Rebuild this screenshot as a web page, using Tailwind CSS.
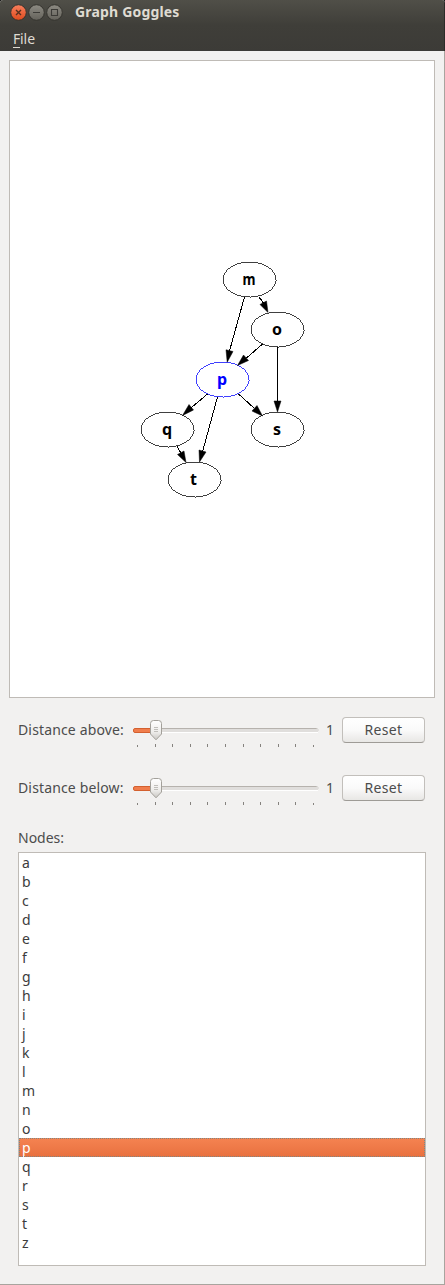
<!DOCTYPE html>
<html lang="en">
<head>
<meta charset="utf-8">
<title>Graph Goggles</title>
<script src="https://cdn.jsdelivr.net/npm/@tailwindcss/browser@4"></script>
</head>
<body class="bg-black">
<div class="flex h-[1285px] w-[445px] flex-col overflow-hidden rounded-t-[3px] border-b border-[#a8a49e] bg-[#f2f1f0] font-['Noto_Sans',sans-serif] text-[14px] text-[#4c4c4c]">
  <header class="h-[51px] shrink-0 border-r border-[#2c2b28] bg-linear-to-b from-[#504f48] via-[#3f3e39] via-50% to-[#3c3b37] text-[#dfdbd2]">
    <div class="flex h-[25px] items-center pl-[10px]">
      <svg class="h-[18px] w-[54px]" viewBox="10 4 54 18" fill="none">
        <defs>
          <linearGradient id="red" x2="0" y2="1"><stop stop-color="#f8805e"/><stop offset="1" stop-color="#dd4a1d"/></linearGradient>
          <linearGradient id="gray" x2="0" y2="1"><stop stop-color="#8d8b83"/><stop offset="1" stop-color="#64625b"/></linearGradient>
        </defs>
        <g stroke="#35342f" stroke-width="1">
          <circle cx="18.5" cy="12.5" r="7.8" fill="url(#red)"/>
          <circle cx="36.5" cy="12.5" r="7.8" fill="url(#gray)"/>
          <circle cx="54.5" cy="12.5" r="7.8" fill="url(#gray)"/>
        </g>
        <path d="M16 10l5 5M21 10l-5 5" stroke="#55301f" stroke-width="1.4"/>
        <path d="M33 12.5h7M51.500 9.500h6v6h-6z" stroke="#3c3b37" stroke-width="1.1"/>
      </svg>
      <h1 class="-mt-[2px] ml-[11px] text-[14px] leading-[24px] font-bold tracking-[0.18px]">Graph Goggles</h1>
    </div>
    <nav class="pl-[13px] text-[14px] leading-[28px]"><span class="inline-block h-[23px] w-[7px] border-b border-[#dfdbd2]">F</span><span>ile</span></nav>
  </header>
  <main class="flex grow flex-col border-r border-[#a8a49e] pt-[9px] pr-[9px] pl-[9px]">
    <div class="h-[638px] w-[426px] shrink-0 border border-[#bfbbb6] bg-white">
      <svg class="block h-[636px] w-[424px]" viewBox="10 61 424 636">
        <g fill="none" stroke="#000" stroke-width="1">
          <g stroke-width=".75" shape-rendering="crispEdges">
            <ellipse cx="249.5" cy="279.5" rx="26.5" ry="17.5"/>
            <ellipse cx="277.5" cy="329.5" rx="26.5" ry="17.5"/>
            <ellipse cx="222.5" cy="379.5" rx="26.5" ry="17.5" stroke="#00f"/>
            <ellipse cx="167.5" cy="429.5" rx="26.5" ry="17.5"/>
            <ellipse cx="277.5" cy="429.5" rx="26.5" ry="17.5"/>
            <ellipse cx="194.500" cy="479.5" rx="26.5" ry="17.5"/>
          </g>
          <path shape-rendering="crispEdges" d="M244.500 297L229.500 351M259 297L263.500 303M262.500 344L246.500 358M277.500 347V402M207.500 394L191.500 407.500M217.500 397L202.500 452M238.500 394L254.500 408.500M177 446.500L181 453"/>
        </g>
        <g fill="#000" stroke="#000" stroke-width=".5">
          <path d="M226 349.800L233 351.500L227.200 362.200ZM260 304.500L266.500 301L268 312.500ZM243.500 355L248.500 360.500L237.500 365.500ZM274 401h7L277.500 412ZM189 404.500L193.500 410L182.500 415.500ZM199 450L206 452L199.500 462ZM257 405.500L252 411L262.500 416ZM177.500 454.500L184 451L186 462.500Z"/>
        </g>
        <g class="text-[16px] font-bold" text-anchor="middle">
          <text x="249" y="285" textLength="13" lengthAdjust="spacingAndGlyphs">m</text><text x="277" y="335">o</text><text x="222" y="385" fill="#00f">p</text><text x="167" y="435">q</text><text x="277" y="435">s</text><text x="193.500" y="485">t</text>
        </g>
      </svg>
    </div>
    <svg class="h-0 w-0 shrink-0">
      <defs>
        <linearGradient id="thumb" x2="0" y2="1"><stop stop-color="#fff"/><stop offset=".6" stop-color="#eeedeb"/><stop offset="1" stop-color="#c9c7c3"/></linearGradient>
        <g id="slider" fill="none">
          <path d="M151 728.500h165.500q1.500 0 1.500 2" stroke="#b6b2ad"/>
          <path d="M151 730.500h167" stroke="#e0dedc" stroke-width="3"/>
          <path d="M151 732.500h167" stroke="#fff"/>
          <rect x="133.500" y="728.500" width="20" height="4" rx="1.500" fill="#f07d4c" stroke="#d3602f"/>
          <path d="M150.500 723.500q0-3 3-3h5q3 0 3 3v10.500l-5.500 5.800l-5.500-5.800z" fill="url(#thumb)" stroke="#a3a09a"/>
          <path d="M154 727.500h4M154 729.500h4M154 731.500h4" stroke="#c0beba"/>
          <path d="M137.500 745v2M155.500 744v3M172.500 744v3M190.500 744v3M207.500 744v3M225.500 744v3M243.500 744v3M260.500 744v3M278.500 744v3M295.500 744v3M313.500 745v2" stroke="#85827e"/>
        </g>
      </defs>
    </svg>
    <div class="mt-[14px] flex h-[58px] shrink-0 items-start pl-[9px]">
      <label class="mt-[5px] w-[114px] text-[14px] leading-[26px] tracking-[0.15px] whitespace-nowrap">Distance above:</label>
      <svg class="mt-[5px] h-[32px] w-[188px]" viewBox="132 717 188 32"><use href="#slider"/></svg>
      <span class="ml-[6px] mt-[5px] w-[16px] leading-[26px]">1</span>
      <button class="mt-[5px] h-[26px] w-[83px] rounded-[4px] border border-[#c2bfbb] border-b-[#9e9b96] bg-linear-to-b from-white via-[#fafafa] to-[#e8e7e5] text-[14px] leading-[24px] tracking-[0.3px]">Reset</button>
    </div>
    <div class="flex h-[58px] shrink-0 items-start pl-[9px]">
      <label class="mt-[5px] w-[114px] text-[14px] leading-[26px] tracking-[0.15px] whitespace-nowrap">Distance below:</label>
      <svg class="mt-[5px] h-[32px] w-[188px]" viewBox="132 717 188 32"><use href="#slider"/></svg>
      <span class="ml-[6px] mt-[5px] w-[16px] leading-[26px]">1</span>
      <button class="mt-[5px] h-[26px] w-[83px] rounded-[4px] border border-[#c2bfbb] border-b-[#9e9b96] bg-linear-to-b from-white via-[#fafafa] to-[#e8e7e5] text-[14px] leading-[24px] tracking-[0.3px]">Reset</button>
    </div>
    <div class="h-[24px] shrink-0 pl-[9px] leading-[20px]">Nodes:</div>
    <ul class="ml-[9px] h-[414px] w-[408px] shrink-0 border border-[#bfbbb6] bg-white text-[14px] leading-[19px] text-[#3c3c3c] *:h-[19px] *:pl-[3px]">
      <li>a</li><li>b</li><li>c</li><li>d</li><li>e</li><li>f</li><li>g</li><li>h</li><li>i</li><li>j</li><li>k</li><li>l</li><li>m</li><li>n</li><li>o</li>
      <li class="bg-linear-to-b from-[#f58351] to-[#e8703f] text-white outline-1 -outline-offset-1 outline-dotted outline-[#7f8582]">p</li>
      <li>q</li><li>r</li><li>s</li><li>t</li><li>z</li>
    </ul>
  </main>
</div>
</body>
</html>
